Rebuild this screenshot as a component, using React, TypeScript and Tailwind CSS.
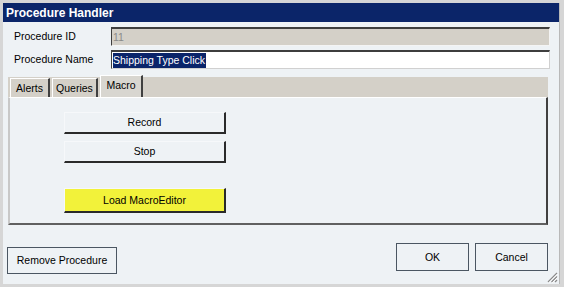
import React from 'react';

const Field: React.FC<{ label: string; children: React.ReactNode }> = ({ label, children }) => (
  <div className="flex h-[19px] items-center">
    <div className="w-[108px] pl-[11px] leading-none">{label}</div>
    {children}
  </div>
);

const MacroButton: React.FC<{ label: string; yellow?: boolean; tall?: boolean }> = ({ label, yellow, tall }) => (
  <button
    className={
      'flex w-[162px] items-center justify-center border-t border-l border-t-[#f6f8fa] border-l-[#f6f8fa] border-b-2 border-r-2 border-b-[#2a2a2a] border-r-[#2a2a2a] leading-none ' +
      (tall ? 'h-[25px] ' : 'h-[22px] ') +
      (yellow ? 'bg-[#f2f23a]' : 'bg-[#eef2f5]')
    }
  >
    {label}
  </button>
);

const FlatButton: React.FC<{ label: string; className: string }> = ({ label, className }) => (
  <button className={'flex items-center justify-center border border-[#4b5662] bg-[#eef2f5] leading-none ' + className}>
    {label}
  </button>
);

const App: React.FC = () => {
  return (
    <div className="h-[287px] w-[564px] bg-[#d6d6d6] pt-[3px] pr-[4px] pb-[3px] pl-[3px] font-['Liberation_Sans',Arial,sans-serif] text-[10.5px] text-black">
      <div className="relative flex h-full flex-col border-r border-[#b8b8b8] bg-[#eef2f5]">
        <div className="flex h-[19px] items-center bg-[#0b2569] pl-[3px] text-[12px] font-bold text-white">
          Procedure Handler
        </div>

        <div className="flex flex-col gap-[4px] pt-[5px] pr-[9px]">
          <Field label="Procedure ID">
            <div className="flex h-full flex-1 items-center border-t-2 border-l border-t-[#3e3e3e] border-l-[#3e3e3e] border-r border-b border-r-[#f4f4f4] border-b-[#f4f4f4] bg-[#d4d0c8] pl-[1px] leading-none text-[#8a8a8a]">
              11
            </div>
          </Field>
          <Field label="Procedure Name">
            <div className="flex h-full flex-1 items-center border-t-2 border-l border-t-[#3e3e3e] border-l-[#3e3e3e] border-r border-b border-r-[#d0d0d0] border-b-[#d0d0d0] bg-white pl-[1px]">
              <span className="flex h-[15px] items-center bg-[#0a246a] pr-[1px] leading-none text-white">Shipping Type Click</span>
            </div>
          </Field>
        </div>

        <div className="mt-[8px] ml-[5px] w-[540px]">
          <div className="flex h-[20px] items-end bg-[#d4d0c8] pl-[2px]">
            <div className="flex h-[19px] w-[40px] items-center justify-center border-t border-l border-t-white border-l-white border-r-2 border-r-[#404040] leading-none">
              Alerts
            </div>
            <div className="ml-[2px] flex h-[19px] w-[46px] items-center justify-center border-t border-l border-t-white border-l-white border-r-2 border-r-[#404040] leading-none">
              Queries
            </div>
            <div className="ml-[2px] flex h-[22px] w-[43px] items-start justify-center border-t border-l border-t-white border-l-white border-r-2 border-r-[#404040] bg-[#d8d6d0] pt-[4px] leading-none">
              Macro
            </div>
          </div>
          <div className="flex h-[128px] flex-col gap-[7px] border-l-2 border-t border-l-[#c8c8c8] border-t-white border-r-2 border-b-2 border-r-[#404040] border-b-[#606060] bg-[#eef2f5] pt-[14px] pl-[54px]">
            <MacroButton label="Record" />
            <MacroButton label="Stop" />
            <div className="mt-[18px]">
              <MacroButton label="Load MacroEditor" yellow tall />
            </div>
          </div>
        </div>

        <div className="mt-[18px] flex items-start justify-between pl-[4px] pr-[11px]">
          <FlatButton label="Remove Procedure" className="mt-[4px] h-[27px] w-[110px]" />
          <div className="flex gap-[6px]">
            <FlatButton label="OK" className="h-[28px] w-[73px]" />
            <FlatButton label="Cancel" className="h-[28px] w-[73px]" />
          </div>
        </div>

        <svg className="absolute right-[1px] bottom-[1px]" width="11" height="11" viewBox="0 0 11 11">
          <g stroke="#8a8a8a" strokeWidth="1.2">
            <line x1="10" y1="1" x2="1" y2="10" />
            <line x1="10" y1="4.5" x2="4.5" y2="10" />
            <line x1="10" y1="8" x2="8" y2="10" />
          </g>
          <g stroke="#ffffff" strokeWidth="1">
            <line x1="10.8" y1="1.8" x2="1.8" y2="10.8" />
            <line x1="10.8" y1="5.3" x2="5.3" y2="10.8" />
          </g>
        </svg>
      </div>
    </div>
  );
};

export default App;
